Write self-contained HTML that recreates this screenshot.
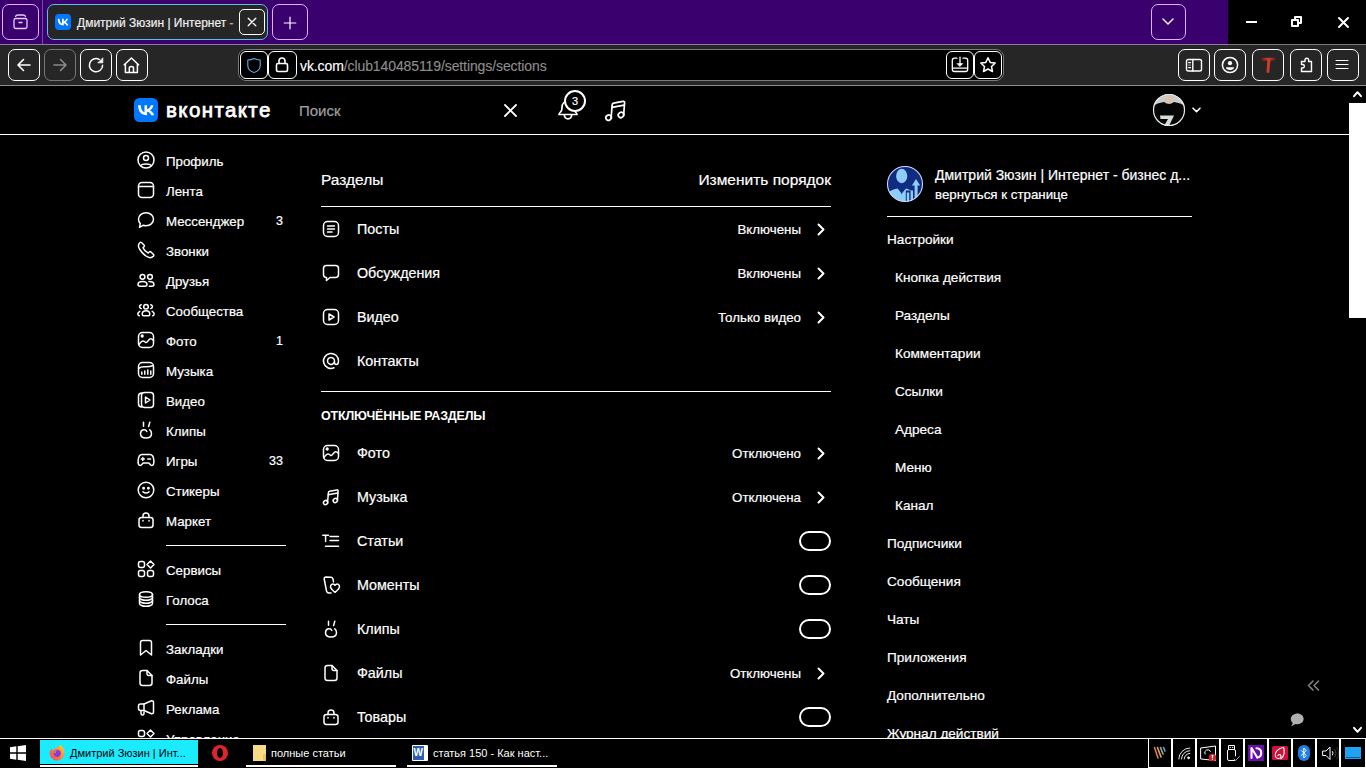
<!DOCTYPE html>
<html><head><meta charset="utf-8">
<style>
*{box-sizing:border-box;margin:0;padding:0}
html,body{width:1366px;height:768px;overflow:hidden;background:#000;font-family:"Liberation Sans",sans-serif;color:#fff}
.a{position:absolute}
.t{position:absolute;white-space:nowrap;line-height:1;-webkit-text-stroke:0.2px currentColor}
svg{position:absolute;overflow:visible}
</style></head><body>

<div class="a" style="left:0px;top:0px;width:1228px;height:44px;background:#3a006e"></div>
<div class="a" style="left:1228px;top:0px;width:138px;height:44px;background:#000"></div>
<div class="a" style="left:0px;top:44px;width:1228px;height:1px;background:#8f7da6"></div>
<div class="a" style="left:1228px;top:44px;width:138px;height:1px;background:#777"></div>
<div class="a" style="left:42px;top:0px;width:1px;height:44px;background:#7a45b0"></div>
<div class="a" style="left:2px;top:4px;width:37px;height:36px;border:1.5px solid #dcb4ff;border-radius:7px;background:none"></div>
<svg style="left:12px;top:13px" width="17" height="17" viewBox="0 0 17 17" fill="none" stroke="#e6ccff" stroke-width="1.3" stroke-linecap="round" stroke-linejoin="round"><path d="M3.5 3.5 Q4 2 6 2 H11 Q13 2 13.5 3.5"/><rect x="2" y="5.5" width="13" height="10" rx="1.8"/><path d="M7 9.5 H10"/></svg>
<div class="a" style="left:47px;top:4px;width:221px;height:36px;border:1.5px solid #5cbfe6;border-radius:7px;background:#262626"></div>
<svg style="left:55px;top:14px" width="16" height="16" viewBox="0 0 48 48"><rect width="48" height="48" rx="11" fill="#0077ff"/><path d="M25.54 34.58c-10.94 0-17.18-7.5-17.44-19.98h5.48c.18 9.16 4.22 13.04 7.42 13.84V14.6h5.16v7.9c3.16-.34 6.48-3.94 7.6-7.9h5.16c-.86 4.88-4.460 8.48-7.02 9.96 2.56 1.2 6.66 4.34 8.22 10.02h-5.68c-1.22-3.8-4.26-6.74-8.28-7.14v7.14z" fill="#fff"/></svg>
<div class="t" style="left:77px;top:16.5px;font-size:12px;color:#eee;font-weight:400;">Дмитрий Зюзин | Интернет -</div>
<div class="a" style="left:226px;top:12px;width:13px;height:20px;background:linear-gradient(90deg,rgba(38,38,38,0),rgba(38,38,38,0.75))"></div>
<div class="a" style="left:239px;top:9px;width:26px;height:26px;border:1.3px solid #fff;border-radius:5px;background:#262626"></div>
<svg style="left:247px;top:17px" width="10" height="10" viewBox="0 0 10 10" fill="none" stroke="#fff" stroke-width="1.3" stroke-linecap="round" stroke-linejoin="round"><path d="M1.2 1.2 L8.8 8.8 M8.8 1.2 L1.2 8.8"/></svg>
<div class="a" style="left:272px;top:4px;width:36px;height:36px;border:1.5px solid #dcb4ff;border-radius:7px;background:none"></div>
<svg style="left:283px;top:16px" width="14" height="14" viewBox="0 0 14 14" fill="none" stroke="#fff" stroke-width="1.2" stroke-linecap="round" stroke-linejoin="round"><path d="M7 1.2 V12.8 M1.2 7 H12.8"/></svg>
<div class="a" style="left:1151px;top:4px;width:35px;height:36px;border:1.5px solid #dcb4ff;border-radius:7px;background:none"></div>
<svg style="left:1162px;top:18px" width="12" height="7" viewBox="0 0 12 7" fill="none" stroke="#fff" stroke-width="1.4" stroke-linecap="round" stroke-linejoin="round"><path d="M1 1 L6 6 L11 1"/></svg>
<div class="a" style="left:1246px;top:21px;width:11px;height:2px;background:#fff"></div>
<svg style="left:1291px;top:16px" width="11" height="11" viewBox="0 0 11 11" fill="none" stroke="#fff" stroke-width="2" stroke-linecap="round" stroke-linejoin="round"><rect x="1" y="4" width="6" height="6"/><path d="M4 4 V1 H10 V7 H7"/></svg>
<svg style="left:1338px;top:17px" width="11" height="11" viewBox="0 0 11 11" fill="none" stroke="#fff" stroke-width="2" stroke-linecap="round" stroke-linejoin="round"><path d="M1 1 L10 10 M10 1 L1 10"/></svg>
<div class="a" style="left:0px;top:45px;width:1366px;height:40px;background:#262626"></div>
<div class="a" style="left:0px;top:85px;width:1366px;height:1px;background:#8a8a8a"></div>
<div class="a" style="left:8px;top:49px;width:32px;height:32px;border:1.5px solid #fff;border-radius:7px;background:none"></div>
<svg style="left:16px;top:57px" width="16" height="16" viewBox="0 0 16 16" fill="none" stroke="#fff" stroke-width="1.6" stroke-linecap="round" stroke-linejoin="round"><path d="M14 8 H2 M7.5 2.5 L2 8 L7.5 13.5"/></svg>
<div class="a" style="left:44px;top:49px;width:32px;height:32px;border:1.5px solid #777;border-radius:7px;background:none"></div>
<svg style="left:52px;top:57px" width="16" height="16" viewBox="0 0 16 16" fill="none" stroke="#8a8a8a" stroke-width="1.6" stroke-linecap="round" stroke-linejoin="round"><path d="M2 8 H14 M8.5 2.5 L14 8 L8.5 13.5"/></svg>
<div class="a" style="left:80px;top:49px;width:32px;height:32px;border:1.5px solid #fff;border-radius:7px;background:none"></div>
<svg style="left:88px;top:57px" width="16" height="16" viewBox="0 0 16 16" fill="none" stroke="#fff" stroke-width="1.5" stroke-linecap="round" stroke-linejoin="round"><path d="M14.6 8.2 A6.6 6.6 0 1 1 11.2 2.4"/><path d="M14.8 1.2 V5.8 H10.2 Z" fill="#fff" stroke-width="0.8"/></svg>
<div class="a" style="left:116px;top:49px;width:32px;height:32px;border:1.5px solid #fff;border-radius:7px;background:none"></div>
<svg style="left:123px;top:56px" width="18" height="18" viewBox="0 0 18 18" fill="none" stroke="#fff" stroke-width="1.5" stroke-linecap="round" stroke-linejoin="round"><path d="M1.2 8.8 L8.4 2 L15.6 8.8 M2.4 7.8 V16.5 H14.4 V7.8 M6.3 16.5 V12 Q6.3 10.4 8.4 10.4 Q10.5 10.4 10.5 12 V16.5"/></svg>
<div class="a" style="left:238px;top:49px;width:766px;height:32px;border:1.3px solid #7a7a7a;border-radius:8px;background:#000"></div>
<div class="a" style="left:240px;top:51px;width:28px;height:28px;border:1.5px solid #fff;border-radius:6px;background:#000"></div>
<svg style="left:246px;top:57px" width="16" height="17" viewBox="0 0 16 17" fill="none" stroke="#62aee6" stroke-width="1.1" stroke-linecap="round" stroke-linejoin="round"><path d="M8 1.5 C5.5 2.8 3.5 3 1.8 3 V8.5 C1.8 12 4.5 14.5 8 15.5 C11.5 14.5 14.2 12 14.2 8.5 V3 C12.5 3 10.5 2.8 8 1.5Z"/></svg>
<div class="a" style="left:268px;top:51px;width:29px;height:28px;border:1.5px solid #fff;border-radius:6px;background:#000"></div>
<svg style="left:274px;top:56px" width="16" height="18" viewBox="0 0 16 18" fill="none" stroke="#fff" stroke-width="1.6" stroke-linecap="round" stroke-linejoin="round"><rect x="2.5" y="7.5" width="11" height="8" rx="1.5"/><path d="M5 7.5 V5 A3 3 0 0 1 11 5 V7.5"/></svg>
<div class="t" style="left:300px;top:59px;font-size:14px;letter-spacing:-0.1px;color:#fff;-webkit-text-stroke:0.15px #fff">vk.com<span style="color:#8c8c8c;-webkit-text-stroke:0.15px #8c8c8c">/club140485119/settings/sections</span></div>
<div class="a" style="left:946px;top:51px;width:28px;height:28px;border:1.5px solid #fff;border-radius:6px;background:#000"></div>
<svg style="left:951px;top:56px" width="18" height="18" viewBox="0 0 18 18" fill="none" stroke="#fff" stroke-width="1.3" stroke-linecap="round" stroke-linejoin="round"><path d="M6 2.2 H3.5 Q1.3 2.2 1.3 4.4 V13.3 Q1.3 15.5 3.5 15.5 H14.5 Q16.7 15.5 16.7 13.3 V4.4 Q16.7 2.2 14.5 2.2 H12 M1.3 12.2 H16.7 M9 1.1 V8"/><path d="M6.2 7.6 H11.8 L9 10.4 Z" fill="#fff" stroke-width="0.6"/></svg>
<div class="a" style="left:974px;top:51px;width:28px;height:28px;border:1.5px solid #fff;border-radius:6px;background:#000"></div>
<svg style="left:979px;top:56px" width="18" height="18" viewBox="0 0 18 18" fill="none" stroke="#fff" stroke-width="1.5" stroke-linecap="round" stroke-linejoin="round"><path d="M9 1.8 L11.2 6.4 L16.2 7 L12.5 10.5 L13.5 15.5 L9 13 L4.5 15.5 L5.5 10.5 L1.8 7 L6.8 6.4 Z"/></svg>
<div class="a" style="left:1178px;top:49px;width:32px;height:32px;border:1.5px solid #fff;border-radius:7px;background:none"></div>
<svg style="left:1185px;top:57px" width="18" height="16" viewBox="0 0 18 16" fill="none" stroke="#fff" stroke-width="1.4" stroke-linecap="round" stroke-linejoin="round"><rect x="1.5" y="2.5" width="15" height="11.5" rx="1.8"/><path d="M7.8 2.5 V14"/><path d="M3.6 5.6 H5.6 M3.6 10.6 H5.6" stroke-width="1.1"/><path d="M3.6 8.1 H5.6" stroke="#999" stroke-width="1.1"/></svg>
<div class="a" style="left:1214px;top:49px;width:32px;height:32px;border:1.5px solid #fff;border-radius:7px;background:none"></div>
<svg style="left:1221px;top:56px" width="18" height="18" viewBox="0 0 18 18" fill="none" stroke="#fff" stroke-width="1.5" stroke-linecap="round" stroke-linejoin="round"><circle cx="9" cy="9" r="7.6"/><circle cx="9" cy="7.2" r="2.1" fill="#fff" stroke="none"/><path d="M5 11.2 H13 Q13 13.9 9 13.9 Q5 13.9 5 11.2Z" fill="#fff" stroke="none"/></svg>
<div class="a" style="left:1252px;top:49px;width:32px;height:32px;border:1.5px solid #fff;border-radius:7px;background:none"></div>
<svg style="left:1259px;top:56px" width="18" height="18" viewBox="0 0 18 18" fill="none" stroke="#fff" stroke-width="0" stroke-linecap="round" stroke-linejoin="round"><defs><linearGradient id="tg" x1="0" x2="1"><stop offset="0" stop-color="#7a1a10"/><stop offset="0.5" stop-color="#d04030"/><stop offset="1" stop-color="#6a1208"/></linearGradient></defs><path d="M2.8 1.8 H17 L16.5 4.5 H11.5 L10.2 16.8 H7.3 L8.3 4.5 H2.4 Z" fill="url(#tg)" stroke="none"/></svg>
<div class="a" style="left:1290px;top:49px;width:32px;height:32px;border:1.5px solid #fff;border-radius:7px;background:none"></div>
<svg style="left:1297px;top:56px" width="18" height="18" viewBox="0 0 18 18" fill="none" stroke="#fff" stroke-width="1.4" stroke-linecap="round" stroke-linejoin="round"><path d="M6 5.5 H8 V4 A1.8 1.8 0 0 1 11.6 4 V5.5 H14.5 V15.5 H4.5 V12 H6 A1.8 1.8 0 0 0 6 8.5 H4.5 V5.5 Z"/></svg>
<div class="a" style="left:1327px;top:49px;width:32px;height:32px;border:1.5px solid #fff;border-radius:7px;background:none"></div>
<svg style="left:1335px;top:58px" width="14" height="14" viewBox="0 0 14 14" fill="none" stroke="#fff" stroke-width="1.1" stroke-linecap="round" stroke-linejoin="round"><path d="M1 2.5 H13 M1 6.5 H13 M1 10.5 H13"/></svg>
<div class="a" style="left:0px;top:134px;width:1349px;height:1px;background:#fff"></div>
<svg style="left:134px;top:98px" width="24" height="24" viewBox="0 0 48 48"><rect width="48" height="48" rx="11" fill="#0077ff"/><path d="M25.54 34.58c-10.94 0-17.18-7.5-17.44-19.98h5.48c.18 9.16 4.22 13.04 7.42 13.84V14.6h5.16v7.9c3.16-.34 6.48-3.94 7.6-7.9h5.16c-.86 4.88-4.460 8.48-7.02 9.96 2.56 1.2 6.66 4.34 8.22 10.02h-5.68c-1.22-3.8-4.26-6.74-8.28-7.14v7.14z" fill="#fff"/></svg>
<div class="t" style="left:166px;top:100.2px;font-size:20.5px;color:#fff;font-weight:400;letter-spacing:1.4px;-webkit-text-stroke:0.75px #fff">вконтакте</div>
<div class="t" style="left:299px;top:102.5px;font-size:15px;color:#a0a0a0;font-weight:400;">Поиск</div>
<svg style="left:504px;top:104px" width="13" height="13" viewBox="0 0 13 13" fill="none" stroke="#fff" stroke-width="1.8" stroke-linecap="round" stroke-linejoin="round"><path d="M1 1 L12 12 M12 1 L1 12"/></svg>
<svg style="left:557px;top:98px" width="24" height="24" viewBox="0 0 24 24" fill="none" stroke="#fff" stroke-width="1.7" stroke-linecap="round" stroke-linejoin="round"><path d="M2 16.5 Q2 15.5 3.5 14 Q5 12.5 5 10 V9.5 C5 5.5 7.5 3 11 3 C14.5 3 17 5.5 17 9.5 V10 Q17 12.5 18.5 14 Q20 15.5 20 16.5 Z"/><path d="M7.3 16.8 Q7.5 20.8 11 20.8 Q14.5 20.8 14.7 16.8"/></svg>
<div class="a" style="left:564px;top:90px;width:22px;height:22px;border-radius:50%;background:#000;border:2px solid #fff"></div>
<div class="t" style="left:575px;top:96.0px;font-size:11px;color:#fff;font-weight:400;width:0;text-align:center;display:flex;justify-content:center">3</div>
<svg style="left:604px;top:99px" width="23" height="23" viewBox="0 0 18 18" fill="none" stroke="#fff" stroke-width="1.35" stroke-linecap="round" stroke-linejoin="round"><path d="M5.6 14.3 L6.4 4.6 Q6.5 3.5 7.6 3.3 L14.8 1.9 Q16.2 1.7 16.1 3 L15.4 12.3"/><path d="M6.2 6.6 L15.8 4.8"/><ellipse cx="3.6" cy="14.6" rx="2.2" ry="2" transform="rotate(-35 3.6 14.6)"/><ellipse cx="13.3" cy="12.5" rx="2.2" ry="2" transform="rotate(-35 13.3 12.5)"/></svg>
<svg style="left:1153px;top:94px" width="32" height="32" viewBox="0 0 32 32"><defs><clipPath id="avc"><circle cx="16" cy="16" r="16"/></clipPath></defs><g clip-path="url(#avc)"><rect width="32" height="32" fill="#c7cdce"/><path d="M11 0 H21 L20 9 Q16 12 12 9 Z" fill="#d9c3b3"/><path d="M0 12 Q4 9 11 8 Q16 12 21 8 Q28 9 32 12 V32 H0 Z" fill="#050505"/><path d="M7 21.5 H21 L16 32 H11 L15 25 H7.5 Z" fill="#d5dcdc"/></g><circle cx="16" cy="16" r="15.5" fill="none" stroke="#e8e8e8" stroke-width="1.2"/></svg>
<svg style="left:1192px;top:107px" width="9" height="6" viewBox="0 0 9 6" fill="none" stroke="#fff" stroke-width="1.6" stroke-linecap="round" stroke-linejoin="round"><path d="M1 1.2 L4.5 4.6 L8 1.2"/></svg>
<div class="a" style="left:1349px;top:86px;width:17px;height:652px;background:#000"></div>
<svg style="left:1353px;top:90px" width="9" height="8" viewBox="0 0 9 8" fill="none" stroke="#fff" stroke-width="2" stroke-linecap="round" stroke-linejoin="round"><path d="M1 6.2 L4.5 2.2 L8 6.2"/></svg>
<div class="a" style="left:1349px;top:103px;width:17px;height:215px;background:#fff"></div>
<svg style="left:1353px;top:726px" width="9" height="8" viewBox="0 0 9 8" fill="none" stroke="#fff" stroke-width="2" stroke-linecap="round" stroke-linejoin="round"><path d="M1 1.8 L4.5 5.8 L8 1.8"/></svg>
<svg style="left:137px;top:151px" width="18" height="18" viewBox="0 0 18 18" fill="none" stroke="#fff" stroke-width="1.5" stroke-linecap="round" stroke-linejoin="round"><circle cx="9" cy="9" r="8"/><circle cx="9" cy="7" r="2.5"/><path d="M3.8 14.6 C5 12.3 13 12.3 14.2 14.6"/></svg>
<div class="t" style="left:166px;top:154.8px;font-size:13.3px;color:#fff;font-weight:400;">Профиль</div>
<svg style="left:137px;top:181px" width="18" height="18" viewBox="0 0 18 18" fill="none" stroke="#fff" stroke-width="1.5" stroke-linecap="round" stroke-linejoin="round"><rect x="1.5" y="1.5" width="15" height="15" rx="3.5"/><path d="M1.5 5.5 H16.5"/></svg>
<div class="t" style="left:166px;top:184.8px;font-size:13.3px;color:#fff;font-weight:400;">Лента</div>
<svg style="left:137px;top:211px" width="18" height="18" viewBox="0 0 18 18" fill="none" stroke="#fff" stroke-width="1.5" stroke-linecap="round" stroke-linejoin="round"><path d="M9 1.8 C13.2 1.8 16.5 4.6 16.5 8.3 C16.5 12 13.2 14.8 9 14.8 C8 14.8 7 14.6 6 14.3 L2.5 16.3 L3.3 12.6 C2.1 11.4 1.5 9.9 1.5 8.3 C1.5 4.6 4.8 1.8 9 1.8Z"/></svg>
<div class="t" style="left:166px;top:214.8px;font-size:13.3px;color:#fff;font-weight:400;">Мессенджер</div>
<div class="t" style="right:1083px;top:214.8px;font-size:12.5px;color:#fff;font-weight:400;">3</div>
<svg style="left:137px;top:241px" width="18" height="18" viewBox="0 0 18 18" fill="none" stroke="#fff" stroke-width="1.5" stroke-linecap="round" stroke-linejoin="round"><path d="M4.5 1.5 L7 4 C7.5 4.5 7.4 5.2 7 5.7 L6 6.8 C6.8 8.8 9.2 11.2 11.2 12 L12.3 11 C12.8 10.6 13.5 10.5 14 11 L16.5 13.5 C17 14 16.9 14.8 16.3 15.3 C14.5 17 12 17.2 9 15 C6 13 4 10.5 2.5 8 C0.8 5 1.2 3 3 1.5 C3.5 1.1 4.1 1.1 4.5 1.5Z"/></svg>
<div class="t" style="left:166px;top:244.8px;font-size:13.3px;color:#fff;font-weight:400;">Звонки</div>
<svg style="left:137px;top:271px" width="18" height="18" viewBox="0 0 18 18" fill="none" stroke="#fff" stroke-width="1.5" stroke-linecap="round" stroke-linejoin="round"><circle cx="5.5" cy="5.8" r="2.4"/><circle cx="13" cy="5.8" r="2.4"/><path d="M1 13.3 Q1 10.5 5.5 10.5 Q10 10.5 10 13.3 Q10 15.3 8 15.3 H3 Q1 15.3 1 13.3 Z"/><path d="M12 10.6 Q16.5 10.5 17 13.3 Q17 15.3 15 15.3 H12.3"/></svg>
<div class="t" style="left:166px;top:274.9px;font-size:13.3px;color:#fff;font-weight:400;">Друзья</div>
<svg style="left:137px;top:301px" width="18" height="18" viewBox="0 0 18 18" fill="none" stroke="#fff" stroke-width="1.5" stroke-linecap="round" stroke-linejoin="round"><circle cx="9" cy="5.7" r="2.3"/><path d="M5.2 13.3 Q5.2 9.8 9 9.8 Q12.8 9.8 12.8 13.3 Q12.8 14.8 11.3 14.8 H6.7 Q5.2 14.8 5.2 13.3 Z"/><path d="M4.2 3.8 Q2.5 4.5 2.5 5.8 Q2.5 7 4.2 7.6 M13.8 3.8 Q15.5 4.5 15.5 5.8 Q15.5 7 13.8 7.6 M2.8 10.3 Q0.8 11.5 0.8 13 Q0.8 14.3 2.2 14.8 M15.2 10.3 Q17.2 11.5 17.2 13 Q17.2 14.3 15.8 14.8"/></svg>
<div class="t" style="left:166px;top:304.9px;font-size:13.3px;color:#fff;font-weight:400;">Сообщества</div>
<svg style="left:137px;top:331px" width="18" height="18" viewBox="0 0 18 18" fill="none" stroke="#fff" stroke-width="1.5" stroke-linecap="round" stroke-linejoin="round"><rect x="1.5" y="1.5" width="15" height="15" rx="4"/><circle cx="5.2" cy="5" r="0.9" fill="#fff"/><path d="M2 13.5 Q4.5 10 6 10 Q7.5 10 8.3 11.2 Q9 12 10 11 L12.5 8.3 Q14 7 16.5 9.5"/></svg>
<div class="t" style="left:166px;top:334.9px;font-size:13.3px;color:#fff;font-weight:400;">Фото</div>
<div class="t" style="right:1083px;top:334.8px;font-size:12.5px;color:#fff;font-weight:400;">1</div>
<svg style="left:137px;top:361px" width="18" height="18" viewBox="0 0 18 18" fill="none" stroke="#fff" stroke-width="1.5" stroke-linecap="round" stroke-linejoin="round"><rect x="1.5" y="1.5" width="15" height="15" rx="4"/><path d="M1.8 7.5 C5 4 9 7.5 16.2 4.5"/><path d="M4.8 11 V13.3 M7.8 10 V13.3 M10.8 9 V13.3 M13.8 10 V13.3"/></svg>
<div class="t" style="left:166px;top:364.9px;font-size:13.3px;color:#fff;font-weight:400;">Музыка</div>
<svg style="left:137px;top:391px" width="18" height="18" viewBox="0 0 18 18" fill="none" stroke="#fff" stroke-width="1.5" stroke-linecap="round" stroke-linejoin="round"><rect x="4.5" y="1.5" width="12" height="15" rx="3"/><path d="M4.8 2 Q1.5 2.3 1.5 5 V13 Q1.5 15.7 4.8 16"/><path d="M8.5 6 L13 9 L8.5 12 Z"/></svg>
<div class="t" style="left:166px;top:394.9px;font-size:13.3px;color:#fff;font-weight:400;">Видео</div>
<svg style="left:137px;top:421px" width="18" height="18" viewBox="0 0 18 18" fill="none" stroke="#fff" stroke-width="1.5" stroke-linecap="round" stroke-linejoin="round"><path d="M6.5 1.2 V5.2 M12.8 1.2 L11.6 5.5"/><path d="M9.8 10.5 Q9 8.5 6.5 8.8 Q3.5 9.3 3.5 12.8 Q3.5 17 9 17 Q14.5 17 14.5 12.5 Q14.5 10 12.8 8.8"/></svg>
<div class="t" style="left:166px;top:424.9px;font-size:13.3px;color:#fff;font-weight:400;">Клипы</div>
<svg style="left:137px;top:451px" width="18" height="18" viewBox="0 0 18 18" fill="none" stroke="#fff" stroke-width="1.5" stroke-linecap="round" stroke-linejoin="round"><path d="M5 3.5 H13 C15.5 3.5 16.5 6 16.8 9 C17.2 12.5 16.5 14.5 14.8 14.5 C13.2 14.5 12.5 12 11.5 12 H6.5 C5.5 12 4.8 14.5 3.2 14.5 C1.5 14.5 0.8 12.5 1.2 9 C1.5 6 2.5 3.5 5 3.5Z"/><path d="M4.3 8 H7.3 M5.8 6.5 V9.5 M10.8 8 H13.5"/></svg>
<div class="t" style="left:166px;top:454.9px;font-size:13.3px;color:#fff;font-weight:400;">Игры</div>
<div class="t" style="right:1083px;top:454.8px;font-size:12.5px;color:#fff;font-weight:400;">33</div>
<svg style="left:137px;top:481px" width="18" height="18" viewBox="0 0 18 18" fill="none" stroke="#fff" stroke-width="1.5" stroke-linecap="round" stroke-linejoin="round"><circle cx="9" cy="9" r="7.8"/><circle cx="6.6" cy="7.2" r="0.7" fill="#fff"/><circle cx="11.4" cy="7.2" r="0.7" fill="#fff"/><path d="M6 10.8 Q9 13 12 10.8"/></svg>
<div class="t" style="left:166px;top:484.9px;font-size:13.3px;color:#fff;font-weight:400;">Стикеры</div>
<svg style="left:137px;top:511px" width="18" height="18" viewBox="0 0 18 18" fill="none" stroke="#fff" stroke-width="1.5" stroke-linecap="round" stroke-linejoin="round"><path d="M2 9 Q2 6.5 4.5 6.5 H13.5 Q16 6.5 16 9 V14 Q16 16.5 13.5 16.5 H4.5 Q2 16.5 2 14 Z"/><path d="M6 6.5 V5 A3 3 0 0 1 12 5 V6.5"/><path d="M6 9.5 V10 M12 9.5 V10"/></svg>
<div class="t" style="left:166px;top:514.9px;font-size:13.3px;color:#fff;font-weight:400;">Маркет</div>
<svg style="left:137px;top:560px" width="18" height="18" viewBox="0 0 18 18" fill="none" stroke="#fff" stroke-width="1.5" stroke-linecap="round" stroke-linejoin="round"><rect x="1.5" y="1.5" width="6" height="6" rx="2"/><rect x="1.5" y="10.5" width="6" height="6" rx="2"/><rect x="10.5" y="10.5" width="6" height="6" rx="2"/><path d="M13.5 1 L17 4.5 L13.5 8 L10 4.5Z"/></svg>
<div class="t" style="left:166px;top:563.9px;font-size:13.3px;color:#fff;font-weight:400;">Сервисы</div>
<svg style="left:137px;top:590px" width="18" height="18" viewBox="0 0 18 18" fill="none" stroke="#fff" stroke-width="1.5" stroke-linecap="round" stroke-linejoin="round"><ellipse cx="9" cy="4.5" rx="6.5" ry="2.8"/><path d="M2.5 4.5 V13.5 C2.5 15 5.5 16.3 9 16.3 C12.5 16.3 15.5 15 15.5 13.5 V4.5"/><path d="M2.5 7.5 C2.5 9 5.5 10.3 9 10.3 C12.5 10.3 15.5 9 15.5 7.5 M2.5 10.5 C2.5 12 5.5 13.3 9 13.3 C12.5 13.3 15.5 12 15.5 10.5"/></svg>
<div class="t" style="left:166px;top:593.9px;font-size:13.3px;color:#fff;font-weight:400;">Голоса</div>
<svg style="left:137px;top:639px" width="18" height="18" viewBox="0 0 18 18" fill="none" stroke="#fff" stroke-width="1.5" stroke-linecap="round" stroke-linejoin="round"><path d="M3.5 3.5 Q3.5 1.5 5.5 1.5 H12.5 Q14.5 1.5 14.5 3.5 V16 L9 11.5 L3.5 16 Z"/></svg>
<div class="t" style="left:166px;top:642.9px;font-size:13.3px;color:#fff;font-weight:400;">Закладки</div>
<svg style="left:137px;top:669px" width="18" height="18" viewBox="0 0 18 18" fill="none" stroke="#fff" stroke-width="1.5" stroke-linecap="round" stroke-linejoin="round"><path d="M3 4 Q3 1.5 5.5 1.5 H10 L15 6.5 V14 Q15 16.5 12.5 16.5 H5.5 Q3 16.5 3 14 Z"/><path d="M10 1.5 V4.5 Q10 6.5 12 6.5 H15"/></svg>
<div class="t" style="left:166px;top:672.9px;font-size:13.3px;color:#fff;font-weight:400;">Файлы</div>
<svg style="left:137px;top:699px" width="18" height="18" viewBox="0 0 18 18" fill="none" stroke="#fff" stroke-width="1.5" stroke-linecap="round" stroke-linejoin="round"><path d="M1.5 7 Q1.5 5 3.5 5 H7 L14.5 1.8 Q16.5 1.5 16.5 3.5 V13 Q16.5 15 14.5 14.7 L7 11.5 H3.5 Q1.5 11.5 1.5 9.5 Z"/><path d="M7 5 V11.5"/><path d="M4 11.5 V14.5 Q4 16 5.5 16 Q7 16 7 14.5 V13"/></svg>
<div class="t" style="left:166px;top:702.9px;font-size:13.3px;color:#fff;font-weight:400;">Реклама</div>
<svg style="left:137px;top:729px" width="18" height="18" viewBox="0 0 18 18" fill="none" stroke="#fff" stroke-width="1.5" stroke-linecap="round" stroke-linejoin="round"><rect x="1.5" y="1.5" width="6" height="6" rx="2"/><rect x="1.5" y="10.5" width="6" height="6" rx="2"/><rect x="10.5" y="10.5" width="6" height="6" rx="2"/><path d="M13.5 1 L17 4.5 L13.5 8 L10 4.5Z"/></svg>
<div class="t" style="left:166px;top:732.9px;font-size:13.3px;color:#fff;font-weight:400;">Управление</div>
<div class="a" style="left:166px;top:545px;width:120px;height:1px;background:#fff"></div>
<div class="a" style="left:166px;top:624px;width:120px;height:1px;background:#fff"></div>
<div class="t" style="left:321px;top:171.8px;font-size:15.5px;color:#fff;font-weight:400;">Разделы</div>
<div class="t" style="right:535px;top:171.6px;font-size:15.5px;color:#fff;font-weight:400;">Изменить порядок</div>
<div class="a" style="left:321px;top:206px;width:510px;height:1px;background:#fff"></div>
<div class="a" style="left:321px;top:391px;width:510px;height:1px;background:#fff"></div>
<svg style="left:322px;top:220px" width="18" height="18" viewBox="0 0 18 18" fill="none" stroke="#fff" stroke-width="1.5" stroke-linecap="round" stroke-linejoin="round"><rect x="1.5" y="1.5" width="15" height="15" rx="4"/><path d="M5.5 6 H12.5 M5.5 9 H12.5 M5.5 12 H10"/></svg>
<div class="t" style="left:357px;top:222.3px;font-size:14.3px;color:#fff;font-weight:400;">Посты</div>
<div class="t" style="right:565px;top:222.8px;font-size:13.3px;color:#fff;font-weight:400;">Включены</div>
<svg style="left:817px;top:222.5px" width="8" height="13" viewBox="0 0 8 13" fill="none" stroke="#fff" stroke-width="2" stroke-linecap="round" stroke-linejoin="round"><path d="M1.5 1.5 L6.5 6.5 L1.5 11.5"/></svg>
<svg style="left:322px;top:264px" width="18" height="18" viewBox="0 0 18 18" fill="none" stroke="#fff" stroke-width="1.5" stroke-linecap="round" stroke-linejoin="round"><path d="M4.5 1.5 H13.5 Q16.5 1.5 16.5 4.5 V10.5 Q16.5 13.5 13.5 13.5 H8 L4.5 16.5 V13.5 Q1.5 13.5 1.5 10.5 V4.5 Q1.5 1.5 4.5 1.5Z"/></svg>
<div class="t" style="left:357px;top:266.4px;font-size:14.3px;color:#fff;font-weight:400;">Обсуждения</div>
<div class="t" style="right:565px;top:266.9px;font-size:13.3px;color:#fff;font-weight:400;">Включены</div>
<svg style="left:817px;top:266.5px" width="8" height="13" viewBox="0 0 8 13" fill="none" stroke="#fff" stroke-width="2" stroke-linecap="round" stroke-linejoin="round"><path d="M1.5 1.5 L6.5 6.5 L1.5 11.5"/></svg>
<svg style="left:322px;top:308px" width="18" height="18" viewBox="0 0 18 18" fill="none" stroke="#fff" stroke-width="1.5" stroke-linecap="round" stroke-linejoin="round"><rect x="1.5" y="1.5" width="15" height="15" rx="4"/><path d="M7 6 L12 9 L7 12 Z"/></svg>
<div class="t" style="left:357px;top:310.4px;font-size:14.3px;color:#fff;font-weight:400;">Видео</div>
<div class="t" style="right:565px;top:310.9px;font-size:13.3px;color:#fff;font-weight:400;">Только видео</div>
<svg style="left:817px;top:310.5px" width="8" height="13" viewBox="0 0 8 13" fill="none" stroke="#fff" stroke-width="2" stroke-linecap="round" stroke-linejoin="round"><path d="M1.5 1.5 L6.5 6.5 L1.5 11.5"/></svg>
<svg style="left:322px;top:352px" width="18" height="18" viewBox="0 0 18 18" fill="none" stroke="#fff" stroke-width="1.5" stroke-linecap="round" stroke-linejoin="round"><path d="M12.5 9 A3.5 3.5 0 1 1 12.5 8.9 V10.5 Q12.5 12.5 14.3 12.5 Q16.5 12.5 16.5 9 A7.5 7.5 0 1 0 12 15.8"/></svg>
<div class="t" style="left:357px;top:354.4px;font-size:14.3px;color:#fff;font-weight:400;">Контакты</div>
<svg style="left:322px;top:444px" width="18" height="18" viewBox="0 0 18 18" fill="none" stroke="#fff" stroke-width="1.5" stroke-linecap="round" stroke-linejoin="round"><rect x="1.5" y="1.5" width="15" height="15" rx="4"/><circle cx="5.2" cy="5" r="0.9" fill="#fff"/><path d="M2 13.5 Q4.5 10 6 10 Q7.5 10 8.3 11.2 Q9 12 10 11 L12.5 8.3 Q14 7 16.5 9.5"/></svg>
<div class="t" style="left:357px;top:446.4px;font-size:14.3px;color:#fff;font-weight:400;">Фото</div>
<div class="t" style="right:565px;top:446.9px;font-size:13.3px;color:#fff;font-weight:400;">Отключено</div>
<svg style="left:817px;top:446.5px" width="8" height="13" viewBox="0 0 8 13" fill="none" stroke="#fff" stroke-width="2" stroke-linecap="round" stroke-linejoin="round"><path d="M1.5 1.5 L6.5 6.5 L1.5 11.5"/></svg>
<svg style="left:322px;top:488px" width="18" height="18" viewBox="0 0 18 18" fill="none" stroke="#fff" stroke-width="1.5" stroke-linecap="round" stroke-linejoin="round"><path d="M5.6 14.3 L6.4 4.6 Q6.5 3.5 7.6 3.3 L14.8 1.9 Q16.2 1.7 16.1 3 L15.4 12.3"/><path d="M6.2 6.8 L15.8 5"/><ellipse cx="3.6" cy="14.6" rx="2.2" ry="2" transform="rotate(-35 3.6 14.6)"/><ellipse cx="13.3" cy="12.5" rx="2.2" ry="2" transform="rotate(-35 13.3 12.5)"/></svg>
<div class="t" style="left:357px;top:490.4px;font-size:14.3px;color:#fff;font-weight:400;">Музыка</div>
<div class="t" style="right:565px;top:490.9px;font-size:13.3px;color:#fff;font-weight:400;">Отключена</div>
<svg style="left:817px;top:490.5px" width="8" height="13" viewBox="0 0 8 13" fill="none" stroke="#fff" stroke-width="2" stroke-linecap="round" stroke-linejoin="round"><path d="M1.5 1.5 L6.5 6.5 L1.5 11.5"/></svg>
<svg style="left:322px;top:532px" width="18" height="18" viewBox="0 0 18 18" fill="none" stroke="#fff" stroke-width="1.5" stroke-linecap="round" stroke-linejoin="round"><path d="M0.8 3.2 H6.5 M3.6 3.2 V9.5 M8 4.5 H16.5 M8 8.6 H16.5 M3.5 14.2 H16.5"/></svg>
<div class="t" style="left:357px;top:534.4px;font-size:14.3px;color:#fff;font-weight:400;">Статьи</div>
<div class="a" style="left:799px;top:531px;width:32px;height:20px;border:2px solid #fff;border-radius:10px;background:none"></div>
<svg style="left:322px;top:576px" width="18" height="18" viewBox="0 0 18 18" fill="none" stroke="#fff" stroke-width="1.5" stroke-linecap="round" stroke-linejoin="round"><path d="M11.5 6 L11 3 Q10.6 1.3 9 1.2 L4 1 Q2 1 2.2 3 L4.5 15 Q5 17 7 17 H9"/><path d="M13 16.3 C10 14 8.5 12.5 8.5 10.5 C8.5 8.5 10.5 7.3 12 8.3 Q12.6 8.7 13 9.3 Q13.4 8.7 14 8.3 C15.5 7.3 17.5 8.5 17.5 10.5 C17.5 12.5 16 14 13 16.3Z"/></svg>
<div class="t" style="left:357px;top:578.4px;font-size:14.3px;color:#fff;font-weight:400;">Моменты</div>
<div class="a" style="left:799px;top:575px;width:32px;height:20px;border:2px solid #fff;border-radius:10px;background:none"></div>
<svg style="left:322px;top:620px" width="18" height="18" viewBox="0 0 18 18" fill="none" stroke="#fff" stroke-width="1.5" stroke-linecap="round" stroke-linejoin="round"><path d="M6.5 1.2 V5.2 M12.8 1.2 L11.6 5.5"/><path d="M9.8 10.5 Q9 8.5 6.5 8.8 Q3.5 9.3 3.5 12.8 Q3.5 17 9 17 Q14.5 17 14.5 12.5 Q14.5 10 12.8 8.8"/></svg>
<div class="t" style="left:357px;top:622.4px;font-size:14.3px;color:#fff;font-weight:400;">Клипы</div>
<div class="a" style="left:799px;top:619px;width:32px;height:20px;border:2px solid #fff;border-radius:10px;background:none"></div>
<svg style="left:322px;top:664px" width="18" height="18" viewBox="0 0 18 18" fill="none" stroke="#fff" stroke-width="1.5" stroke-linecap="round" stroke-linejoin="round"><path d="M3 4 Q3 1.5 5.5 1.5 H10 L15 6.5 V14 Q15 16.5 12.5 16.5 H5.5 Q3 16.5 3 14 Z"/><path d="M10 1.5 V4.5 Q10 6.5 12 6.5 H15"/></svg>
<div class="t" style="left:357px;top:666.4px;font-size:14.3px;color:#fff;font-weight:400;">Файлы</div>
<div class="t" style="right:565px;top:666.9px;font-size:13.3px;color:#fff;font-weight:400;">Отключены</div>
<svg style="left:817px;top:666.5px" width="8" height="13" viewBox="0 0 8 13" fill="none" stroke="#fff" stroke-width="2" stroke-linecap="round" stroke-linejoin="round"><path d="M1.5 1.5 L6.5 6.5 L1.5 11.5"/></svg>
<svg style="left:322px;top:708px" width="18" height="18" viewBox="0 0 18 18" fill="none" stroke="#fff" stroke-width="1.5" stroke-linecap="round" stroke-linejoin="round"><path d="M2 9 Q2 6.5 4.5 6.5 H13.5 Q16 6.5 16 9 V14 Q16 16.5 13.5 16.5 H4.5 Q2 16.5 2 14 Z"/><path d="M6 6.5 V5 A3 3 0 0 1 12 5 V6.5"/><path d="M6 9.5 V10 M12 9.5 V10"/></svg>
<div class="t" style="left:357px;top:710.4px;font-size:14.3px;color:#fff;font-weight:400;">Товары</div>
<div class="a" style="left:799px;top:707px;width:32px;height:20px;border:2px solid #fff;border-radius:10px;background:none"></div>
<div class="t" style="left:321px;top:409.8px;font-size:12.5px;color:#fff;font-weight:700;letter-spacing:-0.2px;-webkit-text-stroke:0">ОТКЛЮЧЁННЫЕ РАЗДЕЛЫ</div>
<svg style="left:887px;top:166px" width="36" height="36" viewBox="0 0 36 36"><defs><clipPath id="gc"><circle cx="18" cy="18" r="17.5"/></clipPath></defs><circle cx="18" cy="18" r="17.5" fill="#0f2c82"/><g clip-path="url(#gc)" fill="#8fcdf6"><ellipse cx="14.7" cy="10" rx="5.6" ry="7.2"/><path d="M1 36 V27 Q3 24 10.5 22.5 L14.7 27.5 L19 22.5 Q22 23 25 25 V36 Z"/><path d="M13.4 23.2 L14.7 29 L16 23.2 Z" fill="#0f2c82"/><rect x="18.8" y="24.5" width="10" height="12" fill="#0f2c82"/><rect x="19.8" y="26.5" width="2.4" height="9"/><rect x="23.6" y="24.5" width="2.4" height="11"/><path d="M29 13 L33.2 19.5 H30.6 V34 H27.6 V19.5 H24.9 Z"/></g><circle cx="18" cy="18" r="17.5" fill="none" stroke="#d0d8ff" stroke-width="1.1"/></svg>
<div class="t" style="left:935px;top:168.0px;font-size:14px;color:#fff;font-weight:400;">Дмитрий Зюзин | Интернет - бизнес д...</div>
<div class="t" style="left:935px;top:187.8px;font-size:13.3px;color:#fff;font-weight:400;">вернуться к странице</div>
<div class="a" style="left:887px;top:216px;width:305px;height:1px;background:#fff"></div>
<div class="t" style="left:887px;top:232.7px;font-size:13.6px;color:#fff;font-weight:400;">Настройки</div>
<div class="t" style="left:895px;top:270.7px;font-size:13.6px;color:#fff;font-weight:400;">Кнопка действия</div>
<div class="t" style="left:895px;top:308.7px;font-size:13.6px;color:#fff;font-weight:400;">Разделы</div>
<div class="t" style="left:895px;top:346.7px;font-size:13.6px;color:#fff;font-weight:400;">Комментарии</div>
<div class="t" style="left:895px;top:384.7px;font-size:13.6px;color:#fff;font-weight:400;">Ссылки</div>
<div class="t" style="left:895px;top:422.7px;font-size:13.6px;color:#fff;font-weight:400;">Адреса</div>
<div class="t" style="left:895px;top:460.7px;font-size:13.6px;color:#fff;font-weight:400;">Меню</div>
<div class="t" style="left:895px;top:498.7px;font-size:13.6px;color:#fff;font-weight:400;">Канал</div>
<div class="t" style="left:887px;top:536.7px;font-size:13.6px;color:#fff;font-weight:400;">Подписчики</div>
<div class="t" style="left:887px;top:574.7px;font-size:13.6px;color:#fff;font-weight:400;">Сообщения</div>
<div class="t" style="left:887px;top:612.7px;font-size:13.6px;color:#fff;font-weight:400;">Чаты</div>
<div class="t" style="left:887px;top:650.7px;font-size:13.6px;color:#fff;font-weight:400;">Приложения</div>
<div class="t" style="left:887px;top:688.7px;font-size:13.6px;color:#fff;font-weight:400;">Дополнительно</div>
<div class="t" style="left:887px;top:726.7px;font-size:13.6px;color:#fff;font-weight:400;">Журнал действий</div>
<svg style="left:1307px;top:680px" width="13" height="11" viewBox="0 0 13 11" fill="none" stroke="#888" stroke-width="1.5" stroke-linecap="round" stroke-linejoin="round"><path d="M6 1 L1.5 5.5 L6 10 M11.5 1 L7 5.5 L11.5 10"/></svg>
<svg style="left:1290px;top:713px" width="14" height="14" viewBox="0 0 14 14" fill="none" stroke="#fff" stroke-width="0" stroke-linecap="round" stroke-linejoin="round"><path d="M7.5 0.6 C10.9 0.6 13.6 3 13.6 6 C13.6 9 10.9 11.2 7.5 11.2 C6.8 11.2 6.2 11.1 5.6 10.9 L1.2 13.3 L2.8 10 C1.6 9 0.8 7.6 0.8 6 C0.8 3 4 0.6 7.5 0.6Z" fill="#b0b0b0" stroke="none"/></svg>
<div class="a" style="left:0px;top:738px;width:1366px;height:30px;background:#000"></div>
<div class="a" style="left:0px;top:738px;width:1366px;height:1px;background:#fff"></div>
<svg style="left:10px;top:745px" width="16" height="16" viewBox="0 0 16 16" fill="none" stroke="#fff" stroke-width="0" stroke-linecap="round" stroke-linejoin="round"><path d="M0 2.2 L6.3 1.35 V7.3 H0 Z M7.7 1.15 L16 0 V7.3 H7.7 Z M0 8.7 H6.3 V14.65 L0 13.8 Z M7.7 8.7 H16 V16 L7.7 14.85 Z" fill="#fff" stroke="none"/></svg>
<div class="a" style="left:40px;top:740px;width:158px;height:24px;background:#1aebff"></div>
<div class="a" style="left:40px;top:765px;width:158px;height:2px;background:#fff"></div>
<svg style="left:49px;top:744px" width="16" height="17" viewBox="0 0 16 17"><defs><linearGradient id="ffg" x1="1" y1="0" x2="0" y2="1"><stop offset="0" stop-color="#ffe226"/><stop offset="0.35" stop-color="#ff9a2e"/><stop offset="1" stop-color="#ff3a5a"/></linearGradient></defs><path d="M8 16.5 A7.3 7.3 0 0 1 1.2 6.5 Q2 5 3.2 4.5 Q3.5 6 4.5 6.5 Q6 3.5 9 3 Q11 1.5 11.5 0.5 Q14.5 3 15.2 7.5 A7.3 7.3 0 0 1 8 16.5Z" fill="url(#ffg)"/><circle cx="8.2" cy="9.3" r="3.6" fill="#7b3fe4"/><path d="M4.6 9 Q5.5 6.2 8.5 5.8 Q6.5 7.2 6.8 9" fill="#ff7a3a"/></svg>
<div class="t" style="left:70px;top:747.5px;font-size:11px;color:#000;font-weight:400;-webkit-text-stroke:0">Дмитрий Зюзин | Инт...</div>
<div class="a" style="left:212px;top:745px;width:16px;height:16px;border-radius:50%;background:#e0242f"></div>
<div class="a" style="left:217px;top:748px;width:6px;height:10px;border-radius:50%;background:#000"></div>
<div class="a" style="left:253px;top:745px;width:13px;height:16px;background:#f6dc85"></div>
<div class="a" style="left:263px;top:754px;width:3px;height:7px;background:#e8c560"></div>
<div class="t" style="left:271px;top:747.5px;font-size:11px;color:#fff;font-weight:400;-webkit-text-stroke:0">полные статьи</div>
<div class="a" style="left:246px;top:765px;width:150px;height:2px;background:#fff"></div>
<div class="a" style="left:412px;top:745px;width:16px;height:16px;background:#fff;border-radius:1px"></div>
<div class="a" style="left:413px;top:746px;width:11px;height:14px;background:#2b5fb3"></div>
<div class="t" style="left:413.5px;top:748.0px;font-size:10px;color:#fff;font-weight:700;-webkit-text-stroke:0">W</div>
<div class="t" style="left:433px;top:747.5px;font-size:11px;color:#fff;font-weight:400;-webkit-text-stroke:0">статья 150 - Как наст...</div>
<div class="a" style="left:407px;top:765px;width:150px;height:2px;background:#fff"></div>
<div class="a" style="left:1148px;top:738px;width:218px;height:30px;background:#fff"></div>
<div class="a" style="left:1149px;top:739px;width:22px;height:28px;background:#000"></div>
<div class="a" style="left:1173px;top:739px;width:22px;height:28px;background:#000"></div>
<div class="a" style="left:1197px;top:739px;width:22px;height:28px;background:#000"></div>
<div class="a" style="left:1221px;top:739px;width:22px;height:28px;background:#000"></div>
<div class="a" style="left:1245px;top:739px;width:22px;height:28px;background:#000"></div>
<div class="a" style="left:1269px;top:739px;width:22px;height:28px;background:#000"></div>
<div class="a" style="left:1293px;top:739px;width:22px;height:28px;background:#000"></div>
<div class="a" style="left:1317px;top:739px;width:22px;height:28px;background:#000"></div>
<div class="a" style="left:1341px;top:739px;width:24px;height:28px;background:#000"></div>
<svg style="left:1152px;top:745px" width="16" height="16" viewBox="0 0 16 16" fill="none" stroke="#fff" stroke-width="1.6" stroke-linecap="round" stroke-linejoin="round"><path d="M2.5 2.5 L6 13 " stroke="#e0785a"/><path d="M5.5 2.5 L9 12" stroke="#e8a060"/><path d="M8.5 2.5 L11 9" stroke="#7ab890"/><path d="M11.5 2.5 L13 6" stroke="#6a9ad0"/></svg>
<svg style="left:1178px;top:747px" width="13" height="13" viewBox="0 0 13 13" fill="none" stroke="#fff" stroke-width="0.9" stroke-linecap="round" stroke-linejoin="round"><path d="M0.8 12 A11 11 0 0 1 11.8 1 M3.5 12 A8.3 8.3 0 0 1 11.8 3.7 M6.2 12 A5.6 5.6 0 0 1 11.8 6.4"/><circle cx="10.5" cy="10.8" r="0.9" fill="#fff"/></svg>
<svg style="left:1200px;top:745px" width="17" height="17" viewBox="0 0 17 17" fill="none" stroke="#fff" stroke-width="1" stroke-linecap="round" stroke-linejoin="round"><path d="M1 3 L15.5 1 V15.5 L1 14 Z"/><path d="M5 9 A3 3 0 0 1 10.5 6.5"/><circle cx="12.5" cy="12.5" r="3.8" fill="#d0202a" stroke="none"/><path d="M12.5 10.3 V12.8" stroke="#fff" stroke-width="1.3"/><circle cx="12.5" cy="14.5" r="0.6" fill="#fff" stroke="none"/></svg>
<svg style="left:1226px;top:744px" width="16" height="18" viewBox="0 0 16 18" fill="none" stroke="#fff" stroke-width="1" stroke-linecap="round" stroke-linejoin="round"><path d="M2.5 5.5 V1.5 H8.5 V5.5"/><path d="M4.3 3.3 V3.5 M6.7 3.3 V3.5" stroke-width="1.2"/><path d="M9.5 12 V7 Q9.5 5.5 8 5.5 H3 Q1.5 5.5 1.5 7 V15 Q1.5 16.5 3 16.5 H8.5"/><path d="M8 15 L9.5 16.5 L13.5 12.5" stroke="#aaa"/></svg>
<div class="a" style="left:1248px;top:745px;width:16px;height:16px;background:#6a0dad"></div>
<svg style="left:1248px;top:745px" width="16" height="16" viewBox="0 0 16 16" fill="none" stroke="#fff" stroke-width="2.1" stroke-linecap="round" stroke-linejoin="round"><path d="M3.5 13 V3 L9.3 12.5"/><path d="M8.5 3.3 Q13.2 3.5 13.2 8 Q13.2 12.5 9.3 12.5"/></svg>
<div class="a" style="left:1272px;top:746px;width:16px;height:14px;background:#d0103a;border-radius:1.5px"></div>
<svg style="left:1272px;top:746px" width="16" height="14" viewBox="0 0 16 14" fill="none" stroke="#fff" stroke-width="1.1" stroke-linecap="round" stroke-linejoin="round"><path d="M11.5 1.2 C5.5 2.5 2.5 6.5 3.3 10 C4 13 8.5 13.5 9 10.5 C9.3 8.5 7 7.8 6 9.5 M11.5 1.2 C13 5 12.5 10 9 12.8"/></svg>
<div class="a" style="left:1298px;top:745px;width:12px;height:16px;background:#1e7fe8;border-radius:6px"></div>
<svg style="left:1299px;top:746px" width="10" height="14" viewBox="0 0 10 14" fill="none" stroke="#fff" stroke-width="1" stroke-linecap="round" stroke-linejoin="round"><path d="M2.3 4.5 L7.3 9.5 L4.8 12 V2 L7.3 4.5 L2.3 9.5"/></svg>
<svg style="left:1321px;top:745px" width="18" height="17" viewBox="0 0 18 17" fill="none" stroke="#fff" stroke-width="1" stroke-linecap="round" stroke-linejoin="round"><path d="M2 6 H5 L9 2 V14.5 L5 10.5 H2 Z"/><path d="M11.5 6.5 Q12.8 8.2 11.5 10"/><path d="M13.8 4.5 Q16.5 8.2 13.8 12" stroke="#444"/><path d="M15.8 2.5 Q19.5 8.2 15.8 14" stroke="#333"/></svg>
<div class="a" style="left:1345px;top:747px;width:16px;height:12px;background:#1fa2f5"></div>
<div class="a" style="left:1346px;top:757px;width:14px;height:1px;background:#0a5e96"></div>
</body></html>
